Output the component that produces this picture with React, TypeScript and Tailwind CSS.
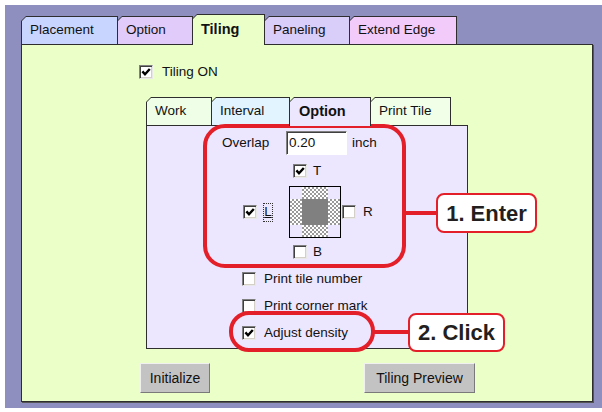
import React from "react";

type TabProps = { label: string; w: string; bg: string; selected?: boolean; first?: boolean };

function Tab({ label, w, bg, selected, first }: TabProps) {
  return (
    <div
      className={`${w} ${first ? "" : "-ml-px"} ${selected ? "relative z-10 -mb-px h-[31px]" : "h-[28px]"} bg-[#2e2e2e] pt-px px-px pb-0 [clip-path:polygon(5px_0,100%_0,100%_100%,0_100%,0_5px)]`}
    >
      <div
        className={`h-full ${bg} flex items-center pl-[8px] ${selected ? "font-bold text-[14.5px]" : "text-[13.5px]"} text-[#111] [clip-path:polygon(4px_0,100%_0,100%_100%,0_100%,0_4px)]`}
      >
        {label}
      </div>
    </div>
  );
}

function Check({ checked }: { checked?: boolean }) {
  return (
    <span className="relative flex items-center justify-center w-[14px] h-[14px] shrink-0 bg-white border border-t-[#808080] border-l-[#808080] border-b-[#e8e8e8] border-r-[#e8e8e8] shadow-[inset_1px_1px_0_#404040,inset_-1px_-1px_0_#d4d0c8]">
      {checked && (
        <svg width="10" height="10" viewBox="0 0 10 10">
          <path d="M1.4 4.4 L4 7.3 L8.8 2" fill="none" stroke="#000" strokeWidth="2.4" />
        </svg>
      )}
    </span>
  );
}

function Btn({ label, w }: { label: string; w: string }) {
  return (
    <div className={`${w} h-[30px] flex items-center justify-center bg-[#c3c3c3] border border-t-[#f0f0f0] border-l-[#f0f0f0] border-b-[#7a7a7a] border-r-[#7a7a7a] text-[14px] text-[#111]`}>
      {label}
    </div>
  );
}

const checker =
  "bg-[conic-gradient(#9a9a9a_25%,#fff_0_50%,#9a9a9a_0_75%,#fff_0)] bg-[length:4px_4px]";

export default function App() {
  return (
    <div className="w-[602px] h-[412px] bg-white pt-[5px] pl-[5px] pb-[4px] font-['Liberation_Sans',Arial,sans-serif] text-[#111]">
      <div className="h-full bg-[#8f8fbf] pl-[16px] pt-[9px]">
        {/* main tabs */}
        <div className="flex items-end h-[30px]">
          <Tab first label="Placement" w="w-[97px]" bg="bg-[#c8d6ff]" />
          <Tab label="Option" w="w-[76px]" bg="bg-[#e0cbfa]" />
          <Tab selected label="Tiling" w="w-[73px]" bg="bg-[#ebffc8]" />
          <Tab label="Paneling" w="w-[86px]" bg="bg-[#d9cdfa]" />
          <Tab label="Extend Edge" w="w-[108px]" bg="bg-[#f3cbfa]" />
        </div>
        {/* main panel */}
        <div className="relative w-[572px] h-[358px] bg-[#ebffc8] border border-[#2e2e2e] shadow-[1px_1px_0_#555]">
          <div className="flex items-center ml-[117px] mt-[20px] h-[14px] text-[13.5px]">
            <Check checked />
            <span className="ml-[9px]">Tiling ON</span>
          </div>

          {/* inner tabs */}
          <div className="ml-[124px] mt-[18px]">
            <div className="flex items-end h-[28px]">
              <Tab first label="Work" w="w-[66px]" bg="bg-[#effee7]" />
              <Tab label="Interval" w="w-[79px]" bg="bg-[#e1f4ff]" />
              <div className="w-[82px] -ml-px relative z-10 -mb-px h-[29px] bg-[#2e2e2e] pt-px px-px [clip-path:polygon(5px_0,100%_0,100%_100%,0_100%,0_5px)]">
                <div className="h-full bg-[#ede6ff] flex items-center pl-[9px] font-bold text-[14.5px] [clip-path:polygon(4px_0,100%_0,100%_100%,0_100%,0_4px)]">
                  Option
                </div>
              </div>
              <Tab label="Print Tile" w="w-[81px]" bg="bg-[#f1ffe8]" />
            </div>
            <div className="w-[322px] h-[224px] bg-[#ede6ff] border border-[#2e2e2e] text-[13.5px]">
              {/* overlap row */}
              <div className="flex items-center h-[24px] mt-[5px] pl-[75px]">
                <span className="w-[64px]">Overlap</span>
                <div className="w-[61px] h-[24px] flex items-center pl-[2px] bg-white border border-t-[#808080] border-l-[#808080] border-b-white border-r-white shadow-[inset_1px_1px_0_#404040]">
                  0.20
                </div>
                <span className="ml-[5px]">inch</span>
              </div>
              {/* T */}
              <div className="flex items-center h-[14px] mt-[9px] pl-[146px]">
                <Check checked />
                <span className="ml-[6px]">T</span>
              </div>
              {/* middle row */}
              <div className="flex items-center h-[52px] mt-[8px] pl-[96px]">
                <Check checked />
                <span className="ml-[6px] w-[10px] h-[19px] border border-dotted border-[#333] flex items-center justify-center leading-none underline">
                  L
                </span>
                <div className="ml-[16px] w-[52px] h-[52px] border border-black grid grid-cols-[12px_26px_12px] grid-rows-[12px_26px_12px]">
                  <div />
                  <div className={checker} />
                  <div />
                  <div className={checker} />
                  <div className="bg-[#808080]" />
                  <div className={checker} />
                  <div />
                  <div className={checker} />
                  <div />
                </div>
                <span className="ml-px">
                  <Check />
                </span>
                <span className="ml-[7px]">R</span>
              </div>
              {/* B */}
              <div className="flex items-center h-[14px] mt-[7px] pl-[146px]">
                <Check />
                <span className="ml-[6px]">B</span>
              </div>
              <div className="flex items-center h-[14px] mt-[13px] pl-[95px]">
                <Check />
                <span className="ml-[8px]">Print tile number</span>
              </div>
              <div className="flex items-center h-[14px] mt-[13px] pl-[95px]">
                <Check />
                <span className="ml-[8px]">Print corner mark</span>
              </div>
              <div className="flex items-center h-[14px] mt-[13px] pl-[95px]">
                <Check checked />
                <span className="ml-[8px]">Adjust density</span>
              </div>
            </div>
          </div>

          {/* buttons */}
          <div className="flex mt-[14px] ml-[118px]">
            <Btn label="Initialize" w="w-[70px]" />
            <div className="ml-[154px]">
              <Btn label="Tiling Preview" w="w-[111px]" />
            </div>
          </div>

          {/* annotations */}
          <div className="absolute left-[181px] top-[79px] w-[203px] h-[144px] border-[4px] border-[#e3202a] rounded-[22px]" />
          <div className="absolute left-[384px] top-[166px] w-[32px] h-[4px] bg-[#e3202a]" />
          <div className="absolute left-[414px] top-[148px] w-[101px] h-[40px] bg-white border-2 border-[#e3202a] rounded-[8px] flex items-center justify-center font-bold text-[22px] text-[#231f20]">
            1. Enter
          </div>
          <div className="absolute left-[207px] top-[266px] w-[146px] h-[41px] border-[4px] border-[#e3202a] rounded-[20px]" />
          <div className="absolute left-[352px] top-[285px] w-[35px] h-[4px] bg-[#e3202a]" />
          <div className="absolute left-[386px] top-[268px] w-[97px] h-[39px] bg-white border-2 border-[#e3202a] rounded-[8px] flex items-center justify-center font-bold text-[22px] text-[#231f20]">
            2. Click
          </div>
        </div>
      </div>
    </div>
  );
}
